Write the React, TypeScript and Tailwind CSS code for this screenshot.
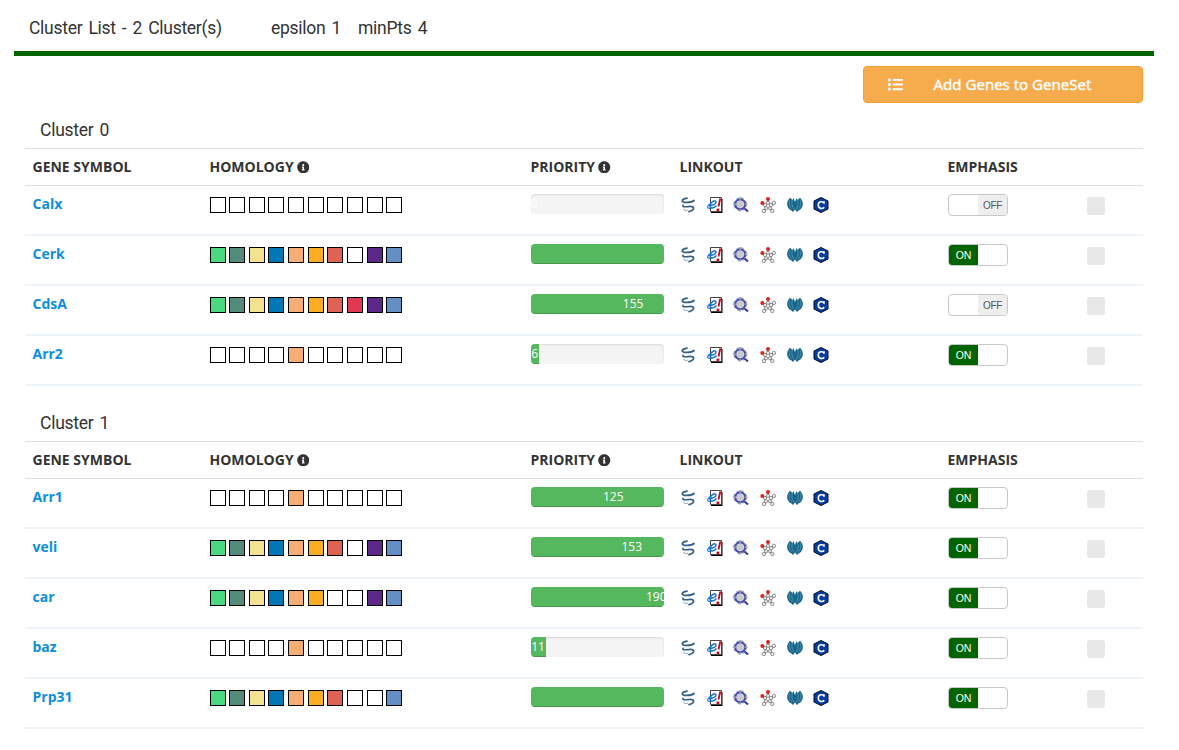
import { FaInfoCircle, FaList } from "react-icons/fa";

const PALETTE = ["#4ad880", "#548c7c", "#f5e290", "#0078b8", "#f8ad72", "#faad20", "#df6354", "#e03855", "#5d2888", "#628fc5"];

type Gene = { name: string; homology: string; score: number; on: boolean };

const clusters: Gene[][] = [
  [
    { name: "Calx", homology: "0000000000", score: 0, on: false },
    { name: "Cerk", homology: "1111111011", score: 300, on: true },
    { name: "CdsA", homology: "1111111111", score: 155, on: false },
    { name: "Arr2", homology: "0000100000", score: 6, on: true },
  ],
  [
    { name: "Arr1", homology: "0000100000", score: 125, on: true },
    { name: "veli", homology: "1111111011", score: 153, on: true },
    { name: "car", homology: "1111110011", score: 190, on: true },
    { name: "baz", homology: "0000100000", score: 11, on: true },
    { name: "Prp31", homology: "1111111001", score: 300, on: true },
  ],
];

function Linkouts() {
  return (
    <div className="flex gap-[10.65px] pt-[11px]">
      <svg className="size-4" viewBox="0 0 16 16" fill="none" strokeLinecap="round">
        <path d="M7 1.200C1.500 2 1 5 4.500 5.300C8 5.600 11.500 5.800 14 3.500" stroke="#335f84" strokeWidth="1.700" />
        <path d="M3 8.300C2.300 10.300 6 9.800 9 9.500C14.500 9 15.800 12.800 9 14.600" stroke="#335f84" strokeWidth="1.700" />
        <path d="M4 12.300C4.500 14 6 14 7.500 13.200" stroke="#7594af" />
      </svg>
      <svg className="size-4" viewBox="0 0 16 16" fill="none">
        <path d="M4 2h11.500v14H4z" fill="#000" />
        <path d="M3.500.5h11v14h-11z" fill="#fff" stroke="#444" />
        <path d="M2 8.500C6 8.500 9.500 6.700 9 4.700C8.500 2.700 4 4.500 3.200 8C2.500 12 6.500 12 9.500 8.500" stroke="#1673d5" strokeWidth="1.500" />
        <path d="M3.500 6.500C-.5 9-.5 12.500 4.500 11" stroke="#1673d5" strokeWidth="1.200" />
        <path d="m13.300 1.500-1.800 8" stroke="#d00010" strokeWidth="1.800" />
        <path d="M9.600 11.600h2.600V14H9.600z" fill="#d00010" />
      </svg>
      <svg className="size-4" viewBox="0 0 16 16" fill="none">
        <circle cx="7.200" cy="7.200" r="6.300" stroke="#a3a5c4" strokeWidth="1.300" strokeDasharray="2.500 2.500" />
        <circle cx="7.200" cy="7.200" r="4.900" stroke="#4a4fa8" strokeWidth="2.300" />
        <circle cx="7.200" cy="7.200" r="3.500" fill="#c9c9c9" />
        <path d="M7.200 0v3m0 8.500v3M0 7.200h3m8.500 0h3" stroke="#8d9bae" strokeWidth="1.500" />
        <path d="m11.500 11.500 3.500 3" stroke="#3337a0" strokeWidth="2" />
      </svg>
      <svg className="size-4" viewBox="0 0 16 16" fill="none">
        <path d="M8 2.500v3m5.500.5L11 7.800M2.500 6 5 7.800M4 13.500l2-2.700m6.200 2.700-2-2.700" stroke="#777" strokeWidth="1.300" />
        <g fill="#eee" stroke="#777" strokeWidth=".8">
          <circle cx="8" cy="5.800" r="1.600" /><circle cx="5" cy="8" r="1.700" /><circle cx="11" cy="8" r="1.700" />
          <circle cx="6.100" cy="11.200" r="1.600" /><circle cx="9.900" cy="11.200" r="1.600" />
          <circle cx="13.900" cy="5.900" r="1.700" /><circle cx="3.900" cy="14" r="1.700" /><circle cx="12.300" cy="14" r="1.700" />
        </g>
        <circle cx="8" cy="2" r="2" fill="#dc241c" /><circle cx="2.300" cy="6" r="2" fill="#dc241c" />
      </svg>
      <svg className="size-4" viewBox="0 0 16 16" fill="none">
        <path d="M3 .8C-1.500 5-.5 11.500 4.500 13.500L6 15L8 12.500L10 15L11.500 13.500C16.500 11.500 17.500 5 13 .8L10.500 3L9.500 1L8 5L6.500 1L5.500 3Z" fill="#19678b" />
        <path d="M2.800 3C1.200 7 3 10 5 12M13.200 3C14.800 7 13 10 11 12M5.300 3C4 7 5.500 10 7 12.500M10.700 3C12 7 10.500 10 9 12.500" stroke="#78b0c5" strokeWidth=".5" />
      </svg>
      <svg className="size-4" viewBox="0 0 16 16">
        <path d="m8 .5 7 3.500v8l-7 3.500L1 12V4z" fill="#063da0" stroke="#00081f" />
        <path d="M11 6.300C10 3.800 5.300 4.200 5.300 8s4.200 4.500 5.900 2.200M11 4.300v2.500" fill="none" stroke="#fff" strokeWidth="1.600" />
      </svg>
    </div>
  );
}

function Toggle({ on }: { on: boolean }) {
  return (
    <div className="mt-2 flex h-[22px] w-[60px] overflow-hidden rounded-[4px] border border-[#c8c8c8] bg-white font-['Liberation_Sans',sans-serif] text-[10.5px] leading-[21px]">
      {on ? (
        <span className="w-[29px] bg-[#006400] text-center text-white">ON</span>
      ) : (
        <span className="ml-[29px] w-[29px] bg-[#eee] text-center text-[10px] tracking-[-0.3px] text-[#555]">OFF</span>
      )}
    </div>
  );
}

function Priority({ score }: { score: number }) {
  return (
    <div className="mt-2 flex h-5 w-[133px] overflow-hidden rounded-[4px] bg-[#f4f4f4] shadow-[inset_0_1px_2px_rgba(0,0,0,0.12)]">
      <div
        className="h-5 shrink-0 bg-[#55b75e] text-center text-[12px] leading-5 text-white shadow-[inset_0_-1px_0_rgba(0,0,0,0.16)]"
        style={{ width: `${score * 0.993}%` }}
      >
        {score < 300 && <span className="-ml-[0.5px]">{score}</span>}
      </div>
    </div>
  );
}

const GRID = "grid grid-cols-[177px_321px_149px_268px_139px_1fr] pl-2";

function Cluster({ index, genes }: { index: number; genes: Gene[] }) {
  return (
    <section className="mx-[25px] w-[1118px]">
      <h2 className="h-[37px] pl-[15px] pt-[7px] font-['Roboto',sans-serif] text-[17.5px] leading-6 tracking-[-0.25px] [word-spacing:2px]">Cluster {index}</h2>
      <div className={`${GRID} h-[38px] border-y border-[#ddd] text-[14px] font-bold leading-9`}>
        <span className="-ml-[0.5px]">GENE SYMBOL</span>
        <span className="-ml-[0.5px] flex items-center gap-[3px]">HOMOLOGY <FaInfoCircle className="size-[12.5px]" /></span>
        <span className="-ml-[0.5px] flex items-center gap-[3px]">PRIORITY <FaInfoCircle className="size-[12.5px]" /></span>
        <span className="-ml-[0.5px]">LINKOUT</span>
        <span className="-ml-[0.5px]">EMPHASIS</span>
      </div>
      {genes.map((gene) => (
        <div key={gene.name} className={`${GRID} h-[50px] border-b-2 border-[#eef3f8]`}>
          <a className="-ml-[0.5px] pt-2 text-[14px] font-bold leading-5 text-[#0d8ddb]">{gene.name}</a>
          <div className="-ml-[0.4px] flex gap-[3.625px] pt-[11px]">
            {gene.homology.split("").map((hit, i) => (
              <span key={i} className="size-4 border border-black" style={{ backgroundColor: hit === "1" ? PALETTE[i] : "#fff" }} />
            ))}
          </div>
          <Priority score={gene.score} />
          <Linkouts />
          <Toggle on={gene.on} />
          <span className="mt-[11px] size-[18px] rounded-[3px] bg-[#e8e8e8]" />
        </div>
      ))}
    </section>
  );
}

export default function App() {
  return (
    <main className="h-[750px] overflow-hidden bg-white font-['Open_Sans',sans-serif] text-[#333]">
      <header className="ml-[14px] flex h-14 w-[1140px] border-b-5 border-[#006400] pl-[15px] pt-4 font-['Roboto',sans-serif] text-[17.5px] leading-6 tracking-[-0.27px] [word-spacing:2px]">
        <span className="w-[242px]">Cluster List - 2 Cluster(s)</span>
        <span className="w-[87px]">epsilon 1</span>
        <span>minPts 4</span>
      </header>
      <div className="flex h-[55px] w-[1143px] justify-end pt-[10px]">
        <button className="flex h-[37px] w-[280px] items-center rounded-[4px] border border-[#f59f31] bg-[#f6ac4c] pl-6 text-[15.1px] text-white">
          <FaList className="size-[15px]" />
          <span className="ml-[30.5px] [-webkit-text-stroke:0.4px_white]">Add Genes to GeneSet</span>
        </button>
      </div>
      <Cluster index={0} genes={clusters[0]} />
      <div className="h-[18px]" />
      <Cluster index={1} genes={clusters[1]} />
    </main>
  );
}
